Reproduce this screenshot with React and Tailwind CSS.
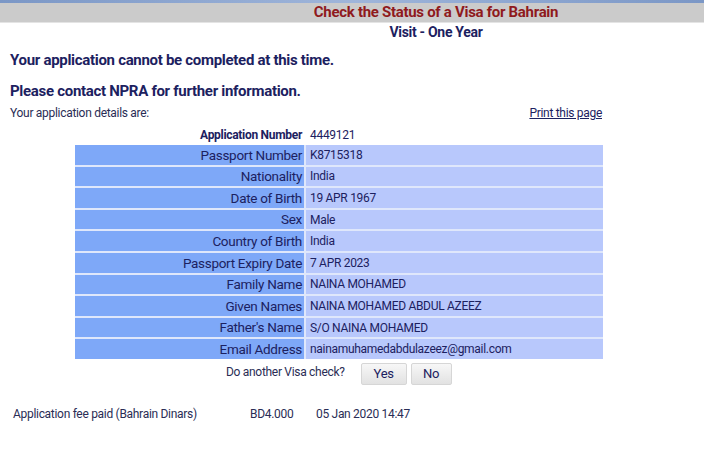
import React from 'react';

const rows = [
  ['Passport Number', 'K8715318'],
  ['Nationality', 'India'],
  ['Date of Birth', '19 APR 1967'],
  ['Sex', 'Male'],
  ['Country of Birth', 'India'],
  ['Passport Expiry Date', '7 APR 2023'],
  ['Family Name', 'NAINA MOHAMED'],
  ['Given Names', 'NAINA MOHAMED ABDUL AZEEZ'],
  ["Father's Name", 'S/O NAINA MOHAMED'],
  ['Email Address', 'nainamuhamedabdulazeez@gmail.com'],
];

const App = () => {
  return (
    <div className="w-[704px] h-[462px] bg-white overflow-hidden text-[#1c2160] tracking-[-0.3px] font-['Roboto',sans-serif]">
      {/* Header strip */}
      <div className="h-[3px] bg-gradient-to-r from-[#7b97c6] via-[#9fb5da] to-[#7b97c6]" />
      <div className="h-[20px] bg-[#cbcbcb] border-b border-[#e4e4e4] pl-[168px] flex items-center justify-center">
        <h1 className="text-[15px] font-bold text-[#8f1a1d] leading-none">Check the Status of a Visa for Bahrain</h1>
      </div>
      <div className="pl-[168px] text-center h-[18px] flex items-center justify-center">
        <h2 className="text-[14px] font-bold leading-none">Visit - One Year</h2>
      </div>

      {/* Messages */}
      <div className="px-[10px] pt-[10px]">
        <p className="text-[15px] font-bold leading-[18px]">Your application cannot be completed at this time.</p>
        <p className="text-[15px] font-bold leading-[18px] mt-[13px]">Please contact NPRA for further information.</p>
        <div className="flex justify-between items-center mt-[4px] pr-[92px]">
          <span className="text-[12px] text-[#2a2d55]">Your application details are:</span>
          <a href="#" className="text-[12px] underline text-[#1c2160]">Print this page</a>
        </div>
      </div>

      {/* Details */}
      <div className="ml-[75px] w-[528px] mt-[3px]">
        <div className="grid grid-cols-[229px_1fr] gap-x-[2px] h-[19px] items-center">
          <span className="text-right text-[12px] font-bold pr-[2px]">Application Number</span>
          <span className="text-[12px] pl-[4px]">4449121</span>
        </div>
        <div className="grid grid-cols-[229px_1fr] gap-[2px] bg-[#dfe7fb] mt-[1px]">
          {rows.map(([label, value]) => (
            <React.Fragment key={label}>
              <div className="h-[19.6px] bg-[#7ea8f8] flex items-center justify-end pr-[2px] text-[13.5px]">{label}</div>
              <div className="h-[19.6px] bg-[#b8c8fc] flex items-center pl-[4px] text-[12px]">{value}</div>
            </React.Fragment>
          ))}
        </div>
      </div>

      {/* Another check */}
      <div className="flex items-center mt-[4px] pl-[226px]">
        <span className="text-[12px] text-[#2a2d55] -mt-[4px]">Do another Visa check?</span>
        <button className="ml-[16px] w-[46px] h-[22px] text-[13px] text-[#1c2160] bg-gradient-to-b from-[#f7f7f7] to-[#e2e2e2] border border-[#d6d6d6] rounded-[2px]">Yes</button>
        <button className="ml-[4px] w-[41px] h-[22px] text-[13px] text-[#1c2160] bg-gradient-to-b from-[#f7f7f7] to-[#e2e2e2] border border-[#d6d6d6] rounded-[2px]">No</button>
      </div>

      {/* Fee */}
      <div className="flex items-center mt-[20px] pl-[13px] text-[12px] text-[#2a2d55]">
        <span className="w-[237px]">Application fee paid (Bahrain Dinars)</span>
        <span className="w-[66px]">BD4.000</span>
        <span>05 Jan 2020 14:47</span>
      </div>
    </div>
  );
};

export default App;
